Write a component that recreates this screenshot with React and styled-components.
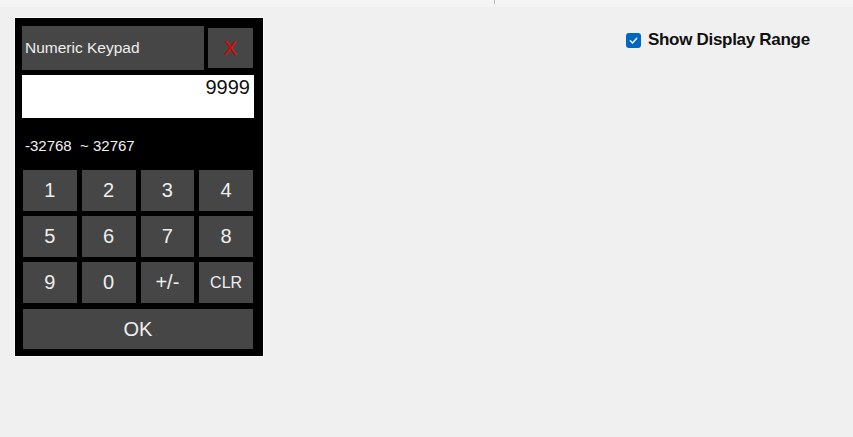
import styled, { createGlobalStyle } from "styled-components";

const GlobalStyle = createGlobalStyle`
  body {
    margin: 0;
    background: #f0f0f0;
    font-family: "Liberation Sans", Arial, sans-serif;
  }
`;

const keys = ["1", "2", "3", "4", "5", "6", "7", "8", "9", "0", "+/-", "CLR"];

const App = () => {
  return (
    <Page>
      <GlobalStyle />
      <TopStrip>
        <StripMark />
      </TopStrip>
      <Content>
        <Keypad>
          <Header>
            <Title>Numeric Keypad</Title>
            <CloseBTN>X</CloseBTN>
          </Header>
          <Display>9999</Display>
          <Range>-32768  ~ 32767</Range>
          <Keys>
            {keys.map((key) => (
              <Key key={key} $small={key === "CLR"}>
                {key}
              </Key>
            ))}
            <OkKey>OK</OkKey>
          </Keys>
        </Keypad>
        <Option>
          <Check>
            <svg width="11" height="11" viewBox="0 0 11 11">
              <path
                d="M2.3 5.8 L4.5 8 L8.8 3.2"
                fill="none"
                stroke="#fff"
                strokeWidth="1.3"
                strokeLinecap="round"
                strokeLinejoin="round"
              />
            </svg>
          </Check>
          <OptionLabel>Show Display Range</OptionLabel>
        </Option>
      </Content>
    </Page>
  );
};

export default App;

const Page = styled.div`
  width: 853px;
  height: 437px;
  overflow: hidden;
`;

const TopStrip = styled.div`
  height: 7px;
  background: #f4f4f4;
  position: relative;
`;

const StripMark = styled.div`
  position: absolute;
  left: 494px;
  top: 0;
  width: 1px;
  height: 4px;
  background: #b8b8b8;
`;

const Content = styled.div`
  display: flex;
  align-items: flex-start;
  padding: 11px 0 0 15px;
`;

const Keypad = styled.div`
  width: 248px;
  height: 338px;
  box-sizing: border-box;
  background: #000;
  padding: 8px 9px 6px 7px;
  display: flex;
  flex-direction: column;
  box-shadow: 0 0 0 1px #fafafa;
`;

const Header = styled.div`
  display: flex;
  align-items: center;
  gap: 4px;
  height: 44px;
`;

const Title = styled.div`
  width: 182px;
  height: 44px;
  background: #464646;
  color: #eeeeee;
  font-size: 15.5px;
  display: flex;
  align-items: center;
  padding-left: 3px;
  box-sizing: border-box;
`;

const CloseBTN = styled.button`
  width: 45px;
  height: 40px;
  border: none;
  padding: 0;
  background: #464646;
  color: #e00000;
  font-family: "Liberation Sans", Arial, sans-serif;
  font-size: 20px;
  display: flex;
  align-items: center;
  justify-content: center;
`;

const Display = styled.div`
  margin-top: 5px;
  height: 43px;
  background: #fff;
  color: #111;
  font-size: 20px;
  text-align: right;
  padding: 1px 4px 0 0;
  box-sizing: border-box;
`;

const Range = styled.div`
  height: 52px;
  display: flex;
  align-items: center;
  padding: 2px 0 0 3px;
  box-sizing: border-box;
  color: #f2f2f2;
  font-size: 15px;
  white-space: pre;
`;

const Keys = styled.div`
  margin-left: 1px;
  width: 230px;
  display: grid;
  grid-template-columns: repeat(4, 1fr);
  grid-auto-rows: 41px;
  gap: 5px;
`;

const Key = styled.button`
  border: none;
  padding: 0;
  background: #464646;
  color: #eeeeee;
  font-family: "Liberation Sans", Arial, sans-serif;
  font-size: ${(props) => (props.$small ? "16px" : "20px")};
`;

const OkKey = styled(Key)`
  grid-column: 1 / -1;
  margin-top: 1px;
`;

const Option = styled.label`
  margin: 12px 0 0 363px;
  display: flex;
  align-items: center;
  gap: 7px;
`;

const Check = styled.span`
  width: 15px;
  height: 15px;
  border-radius: 3px;
  background: #0067c0;
  display: flex;
  align-items: center;
  justify-content: center;
`;

const OptionLabel = styled.span`
  font-weight: bold;
  font-size: 17px;
  letter-spacing: -0.3px;
  color: #111;
`;
